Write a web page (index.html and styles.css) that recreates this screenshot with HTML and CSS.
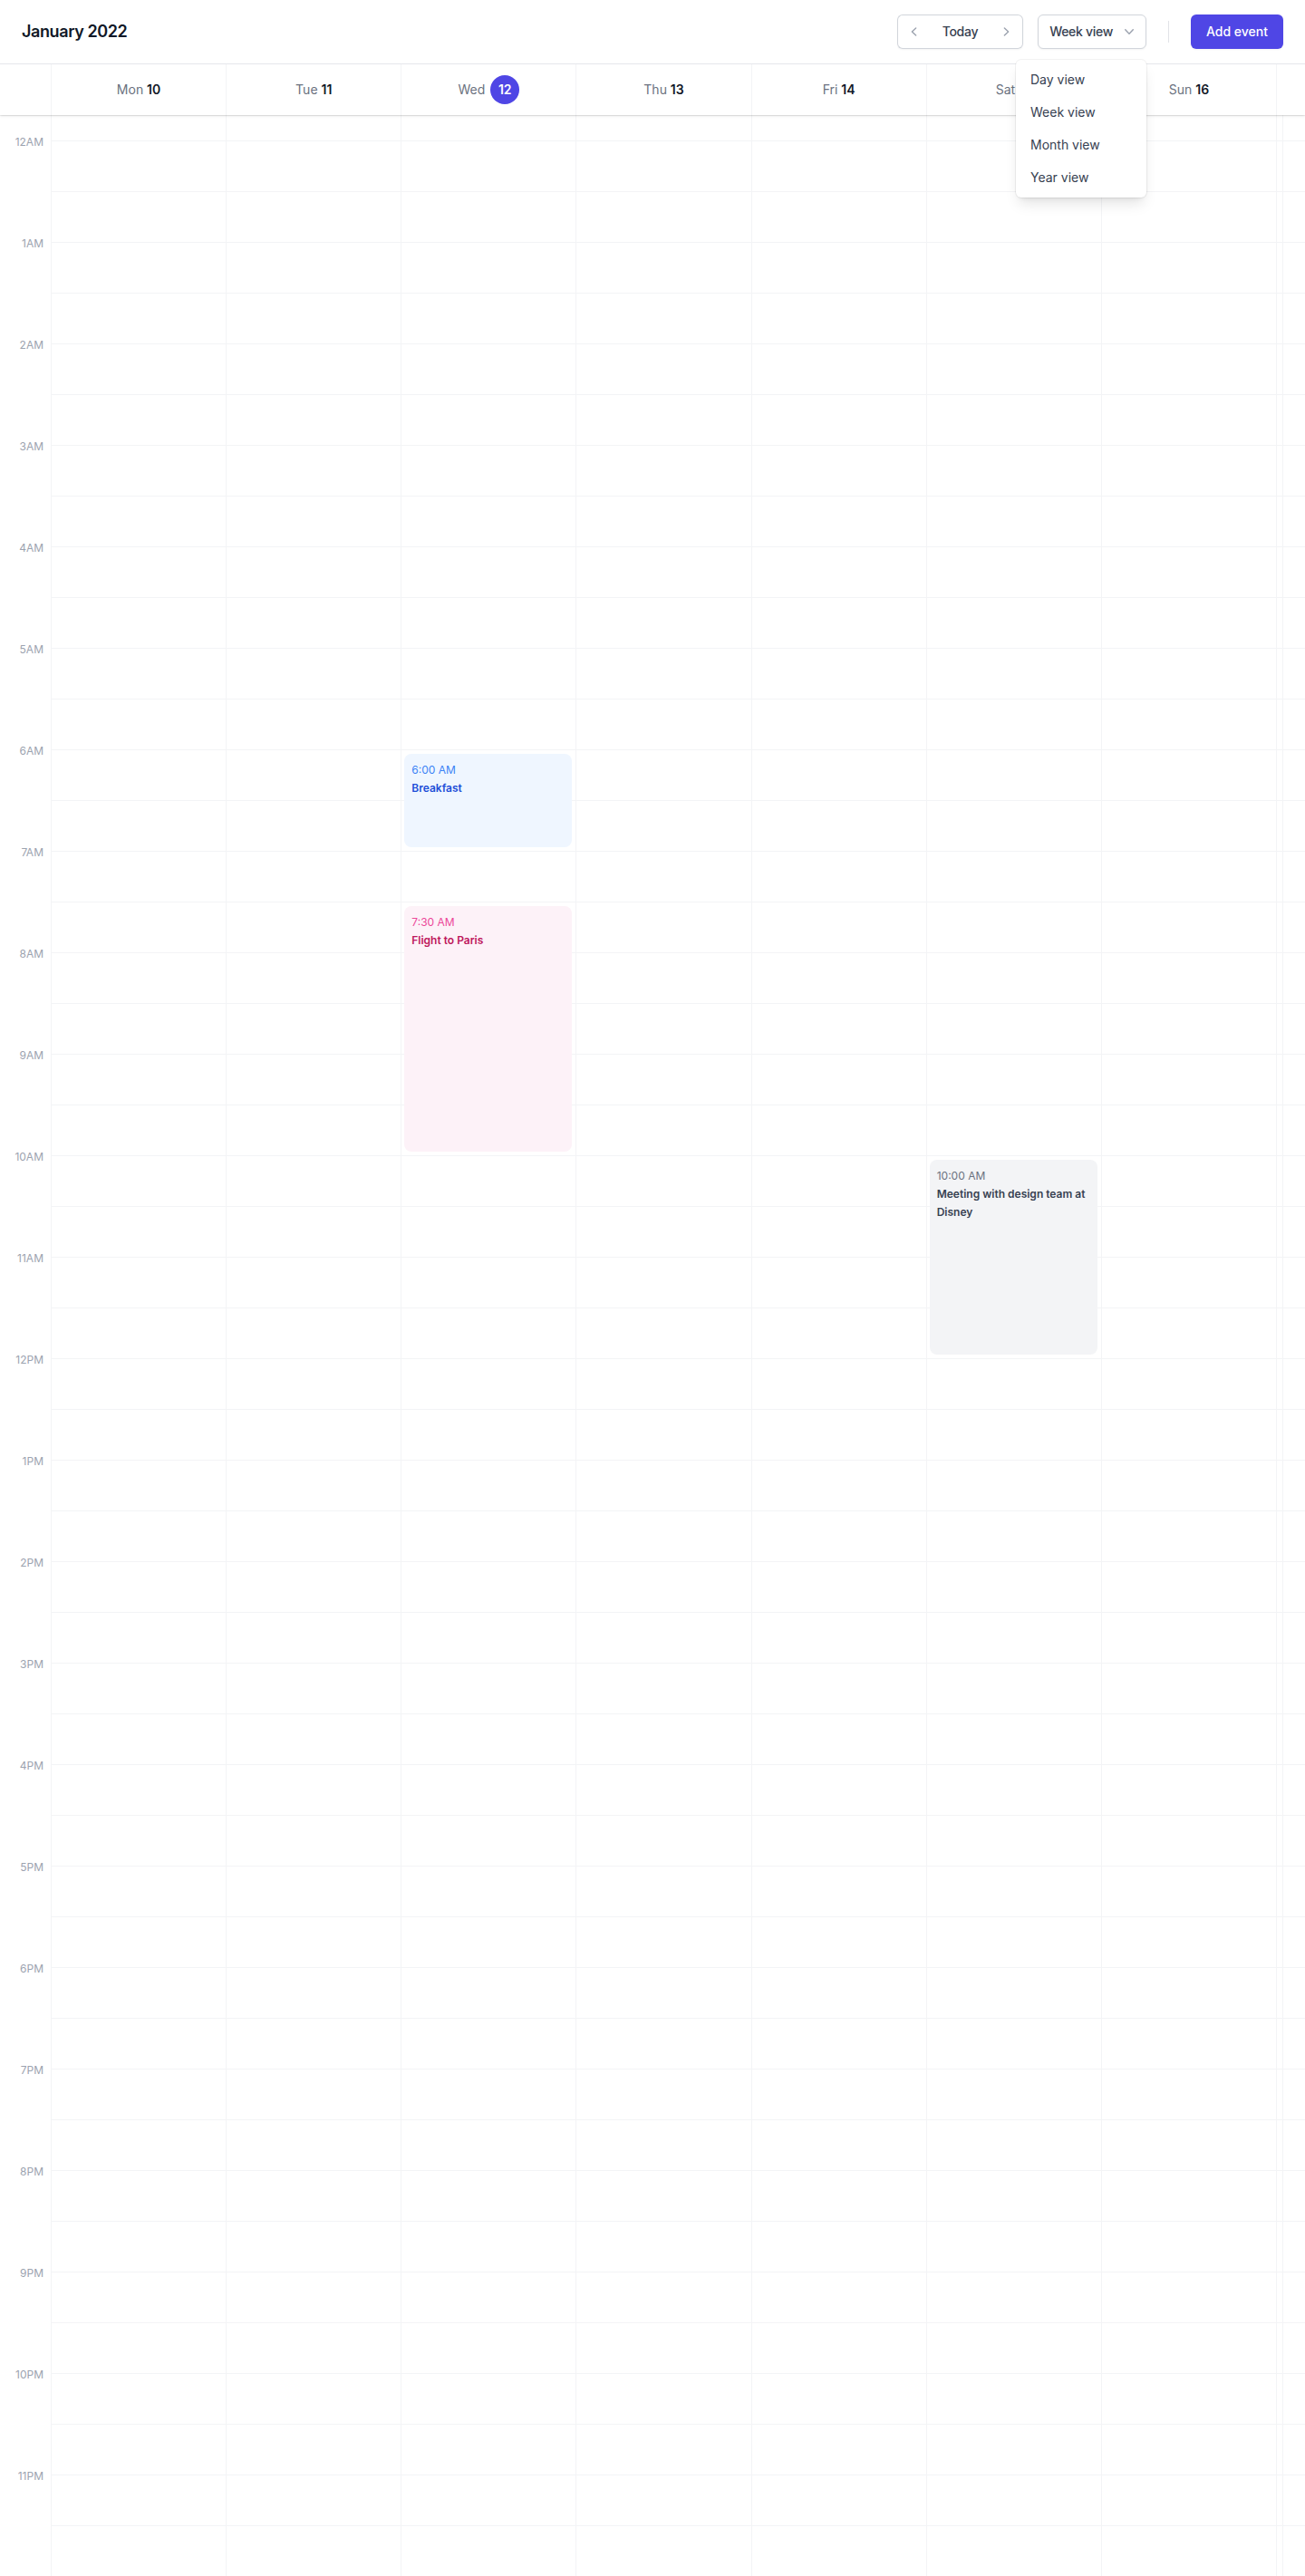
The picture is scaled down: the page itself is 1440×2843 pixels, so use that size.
FILE: index.html
```html
<!DOCTYPE html>
<html lang="en">
<head>
<meta charset="utf-8">
<title>Calendar – Week view</title>
<link rel="stylesheet" href="styles.css">
</head>
<body>
<div class="app">
  <header class="topbar">
    <h1 class="title"><time datetime="2022-01">January 2022</time></h1>
    <div class="actions">
      <div class="nav-group">
        <button type="button" class="nav-btn nav-prev" aria-label="Previous week">
          <svg class="icon" viewBox="0 0 20 20" fill="currentColor" aria-hidden="true"><path fill-rule="evenodd" d="M12.79 5.23a.75.75 0 01-.02 1.06L8.832 10l3.938 3.71a.75.75 0 11-1.040 1.08l-4.5-4.25a.75.75 0 010-1.08l4.5-4.25a.75.75 0 011.06.02z" clip-rule="evenodd"/></svg>
        </button>
        <button type="button" class="nav-today">Today</button>
        <button type="button" class="nav-btn nav-next" aria-label="Next week">
          <svg class="icon" viewBox="0 0 20 20" fill="currentColor" aria-hidden="true"><path fill-rule="evenodd" d="M7.21 14.77a.75.75 0 01.02-1.06L11.168 10 7.23 6.29a.75.75 0 111.04-1.08l4.5 4.25a.75.75 0 010 1.08l-4.5 4.25a.75.75 0 01-1.06-.02z" clip-rule="evenodd"/></svg>
        </button>
      </div>
      <div class="view-menu">
        <button type="button" class="view-btn">Week view
          <svg class="icon icon-down" viewBox="0 0 20 20" fill="currentColor" aria-hidden="true"><path fill-rule="evenodd" d="M5.23 7.21a.75.75 0 011.06.02L10 11.168l3.71-3.938a.75.75 0 111.08 1.04l-4.25 4.5a.75.75 0 01-1.08 0l-4.25-4.5a.75.75 0 01.02-1.06z" clip-rule="evenodd"/></svg>
        </button>
        <div class="menu-items">
          <a href="#" class="menu-item">Day view</a>
          <a href="#" class="menu-item">Week view</a>
          <a href="#" class="menu-item">Month view</a>
          <a href="#" class="menu-item">Year view</a>
        </div>
      </div>
      <div class="divider"></div>
      <button type="button" class="add-btn">Add event</button>
    </div>
  </header>

  <div class="calendar">
    <div class="days-head">
      <div class="days-grid">
        <div class="days-spacer"></div>
        <div class="day"><span>Mon <span class="day-num">10</span></span></div>
        <div class="day"><span>Tue <span class="day-num">11</span></span></div>
        <div class="day"><span class="day-today">Wed <span class="today-badge">12</span></span></div>
        <div class="day"><span>Thu <span class="day-num">13</span></span></div>
        <div class="day"><span>Fri <span class="day-num">14</span></span></div>
        <div class="day"><span>Sat <span class="day-num">15</span></span></div>
        <div class="day"><span>Sun <span class="day-num">16</span></span></div>
      </div>
    </div>

    <div class="body">
      <div class="time-col"></div>
      <div class="board">
        <div class="hlines">
          <div class="hoffset"></div>
          <div class="hrow"><div class="hlabel">12AM</div></div><div class="hrow"></div>
          <div class="hrow"><div class="hlabel">1AM</div></div><div class="hrow"></div>
          <div class="hrow"><div class="hlabel">2AM</div></div><div class="hrow"></div>
          <div class="hrow"><div class="hlabel">3AM</div></div><div class="hrow"></div>
          <div class="hrow"><div class="hlabel">4AM</div></div><div class="hrow"></div>
          <div class="hrow"><div class="hlabel">5AM</div></div><div class="hrow"></div>
          <div class="hrow"><div class="hlabel">6AM</div></div><div class="hrow"></div>
          <div class="hrow"><div class="hlabel">7AM</div></div><div class="hrow"></div>
          <div class="hrow"><div class="hlabel">8AM</div></div><div class="hrow"></div>
          <div class="hrow"><div class="hlabel">9AM</div></div><div class="hrow"></div>
          <div class="hrow"><div class="hlabel">10AM</div></div><div class="hrow"></div>
          <div class="hrow"><div class="hlabel">11AM</div></div><div class="hrow"></div>
          <div class="hrow"><div class="hlabel">12PM</div></div><div class="hrow"></div>
          <div class="hrow"><div class="hlabel">1PM</div></div><div class="hrow"></div>
          <div class="hrow"><div class="hlabel">2PM</div></div><div class="hrow"></div>
          <div class="hrow"><div class="hlabel">3PM</div></div><div class="hrow"></div>
          <div class="hrow"><div class="hlabel">4PM</div></div><div class="hrow"></div>
          <div class="hrow"><div class="hlabel">5PM</div></div><div class="hrow"></div>
          <div class="hrow"><div class="hlabel">6PM</div></div><div class="hrow"></div>
          <div class="hrow"><div class="hlabel">7PM</div></div><div class="hrow"></div>
          <div class="hrow"><div class="hlabel">8PM</div></div><div class="hrow"></div>
          <div class="hrow"><div class="hlabel">9PM</div></div><div class="hrow"></div>
          <div class="hrow"><div class="hlabel">10PM</div></div><div class="hrow"></div>
          <div class="hrow"><div class="hlabel">11PM</div></div><div class="hrow"></div>
        </div>

        <div class="vlines">
          <div class="vcol"></div>
          <div class="vcol"></div>
          <div class="vcol"></div>
          <div class="vcol"></div>
          <div class="vcol"></div>
          <div class="vcol"></div>
          <div class="vcol"></div>
          <div class="vcol vcol-end"></div>
        </div>

        <ol class="events">
          <li class="event" style="grid-row: 74 / span 12; grid-column: 3;">
            <a href="#" class="event-card event-blue">
              <p class="event-title">Breakfast</p>
              <p class="event-time"><time datetime="2022-01-12T06:00">6:00 AM</time></p>
            </a>
          </li>
          <li class="event" style="grid-row: 92 / span 30; grid-column: 3;">
            <a href="#" class="event-card event-pink">
              <p class="event-title">Flight to Paris</p>
              <p class="event-time"><time datetime="2022-01-12T07:30">7:30 AM</time></p>
            </a>
          </li>
          <li class="event" style="grid-row: 122 / span 24; grid-column: 6;">
            <a href="#" class="event-card event-gray">
              <p class="event-title">Meeting with design team at Disney</p>
              <p class="event-time"><time datetime="2022-01-15T10:00">10:00 AM</time></p>
            </a>
          </li>
        </ol>
      </div>
    </div>
  </div>
</div>
</body>
</html>
```

FILE: styles.css
```css
*, *::before, *::after {
  box-sizing: border-box;
}

html {
  font-family: Inter, "Noto Sans", "Liberation Sans", sans-serif;
  -webkit-font-smoothing: antialiased;
}

body {
  margin: 0;
  background: #ffffff;
  color: #111827;
}

p, h1, ol {
  margin: 0;
  padding: 0;
}

ol {
  list-style: none;
}

a {
  text-decoration: none;
  color: inherit;
}

button {
  font-family: inherit;
  cursor: pointer;
  margin: 0;
}

.app {
  display: flex;
  flex-direction: column;
}

/* ---------- Top bar ---------- */
.topbar {
  position: relative;
  z-index: 40;
  display: flex;
  align-items: center;
  justify-content: space-between;
  padding: 16px 24px;
  border-bottom: 1px solid #e5e7eb;
  background: #ffffff;
}

.title {
  font-size: 18px;
  line-height: 28px;
  font-weight: 600;
  letter-spacing: -0.4px;
  color: #111827;
}

.actions {
  display: flex;
  align-items: center;
}

.nav-group {
  display: flex;
  align-items: stretch;
  border-radius: 6px;
  box-shadow: 0 1px 2px 0 rgba(0, 0, 0, 0.05);
}

.icon {
  width: 20px;
  height: 20px;
  display: block;
}

.nav-btn {
  display: flex;
  align-items: center;
  justify-content: center;
  width: 36px;
  padding: 8px;
  background: #ffffff;
  color: #9ca3af;
  border: 1px solid #d1d5db;
}

.nav-prev {
  border-right: 0;
  border-radius: 6px 0 0 6px;
}

.nav-next {
  border-left: 0;
  border-radius: 0 6px 6px 0;
}

.nav-today {
  padding: 0 14px;
  background: #ffffff;
  border: 0;
  border-top: 1px solid #d1d5db;
  border-bottom: 1px solid #d1d5db;
  font-size: 14px;
  line-height: 20px;
  font-weight: 500;
  letter-spacing: -0.3px;
  color: #374151;
}

.view-menu {
  position: relative;
  margin-left: 16px;
}

.view-btn {
  display: flex;
  align-items: center;
  padding: 8px 8px 8px 12px;
  background: #ffffff;
  border: 1px solid #d1d5db;
  border-radius: 6px;
  box-shadow: 0 1px 2px 0 rgba(0, 0, 0, 0.05);
  font-size: 14px;
  line-height: 20px;
  font-weight: 500;
  letter-spacing: -0.3px;
  color: #374151;
}

.icon-down {
  margin-left: 8px;
  color: #9ca3af;
}

.menu-items {
  position: absolute;
  right: 0;
  top: 100%;
  margin-top: 12px;
  width: 144px;
  padding: 4px 0;
  overflow: hidden;
  border-radius: 6px;
  background: #ffffff;
  box-shadow: 0 10px 15px -3px rgba(0, 0, 0, 0.1), 0 4px 6px -4px rgba(0, 0, 0, 0.1), 0 0 0 1px rgba(0, 0, 0, 0.05);
}

.menu-item {
  display: block;
  padding: 8px 16px;
  font-size: 14px;
  line-height: 20px;
  color: #374151;
}

.divider {
  margin-left: 24px;
  width: 1px;
  height: 24px;
  background: #e1e3e7;
}

.add-btn {
  margin-left: 24px;
  padding: 8px 16px;
  border: 1px solid transparent;
  border-radius: 6px;
  background: #4f46e5;
  box-shadow: 0 1px 2px 0 rgba(0, 0, 0, 0.05);
  font-size: 14px;
  line-height: 20px;
  font-weight: 500;
  color: #ffffff;
}

/* ---------- Calendar ---------- */
.calendar {
  display: flex;
  flex-direction: column;
  background: #ffffff;
}

.days-head {
  position: relative;
  z-index: 30;
  background: #ffffff;
  padding-right: 32px;
  box-shadow: 0 1px 3px 0 rgba(0, 0, 0, 0.1), 0 1px 2px -1px rgba(0, 0, 0, 0.1), 0 0 0 1px rgba(0, 0, 0, 0.05);
}

.days-grid {
  display: grid;
  grid-template-columns: 56px repeat(7, 1fr);
  margin-right: -1px;
  border-right: 1px solid #f3f4f6;
  font-size: 14px;
  line-height: 24px;
  color: #6b7280;
}

.day {
  display: flex;
  align-items: center;
  justify-content: center;
  padding: 12px 0;
  border-left: 1px solid #f3f4f6;
}

.day-num {
  font-weight: 600;
  color: #111827;
}

.day-today {
  display: flex;
  align-items: baseline;
}

.today-badge {
  display: flex;
  align-items: center;
  justify-content: center;
  margin-left: 6px;
  width: 32px;
  height: 32px;
  border-radius: 9999px;
  background: #4f46e5;
  font-weight: 600;
  color: #ffffff;
}

.body {
  display: flex;
}

.time-col {
  position: relative;
  z-index: 10;
  flex: none;
  width: 56px;
  background: #ffffff;
  box-shadow: 0 0 0 1px #f3f4f6;
}

.board {
  flex: 1 1 auto;
  display: grid;
  grid-template-columns: minmax(0, 1fr);
  grid-template-rows: auto;
}

.hlines,
.vlines,
.events {
  grid-column: 1;
  grid-row: 1;
}

.hlines {
  display: grid;
  grid-template-rows: 28px repeat(48, 56px);
}

.hrow {
  border-top: 1px solid #f3f4f6;
}

.hlabel {
  position: relative;
  z-index: 20;
  width: 56px;
  margin-left: -56px;
  margin-top: -9px;
  padding-right: 8px;
  text-align: right;
  font-size: 12px;
  line-height: 20px;
  color: #9ca3af;
}

.vlines {
  display: grid;
  grid-template-columns: repeat(7, minmax(0, 1fr)) 32px;
}

.vcol + .vcol {
  border-left: 1px solid #f3f4f6;
}

.vcol-end {
  background: linear-gradient(to right, transparent 6px, #f3f4f6 6px, #f3f4f6 7px, transparent 7px);
}

.events {
  display: grid;
  grid-template-columns: repeat(7, minmax(0, 1fr));
  grid-template-rows: 28px repeat(288, minmax(0, 1fr)) auto;
  padding-right: 32px;
}

.event {
  display: flex;
  min-height: 0;
  margin-top: 1px;
}

.event-card {
  flex: 1 1 auto;
  display: flex;
  flex-direction: column;
  margin: 4px;
  padding: 8px;
  overflow: hidden;
  border-radius: 8px;
  font-size: 12px;
  line-height: 20px;
}

.event-title {
  order: 1;
  font-weight: 600;
}

.event-blue {
  background: #eff6ff;
}
.event-blue .event-title {
  color: #1d4ed8;
}
.event-blue .event-time {
  color: #3b82f6;
}

.event-pink {
  background: #fdf2f8;
}
.event-pink .event-title {
  color: #be185d;
}
.event-pink .event-time {
  color: #ec4899;
}

.event-gray {
  background: #f3f4f6;
}
.event-gray .event-title {
  color: #374151;
}
.event-gray .event-time {
  color: #6b7280;
}
```
